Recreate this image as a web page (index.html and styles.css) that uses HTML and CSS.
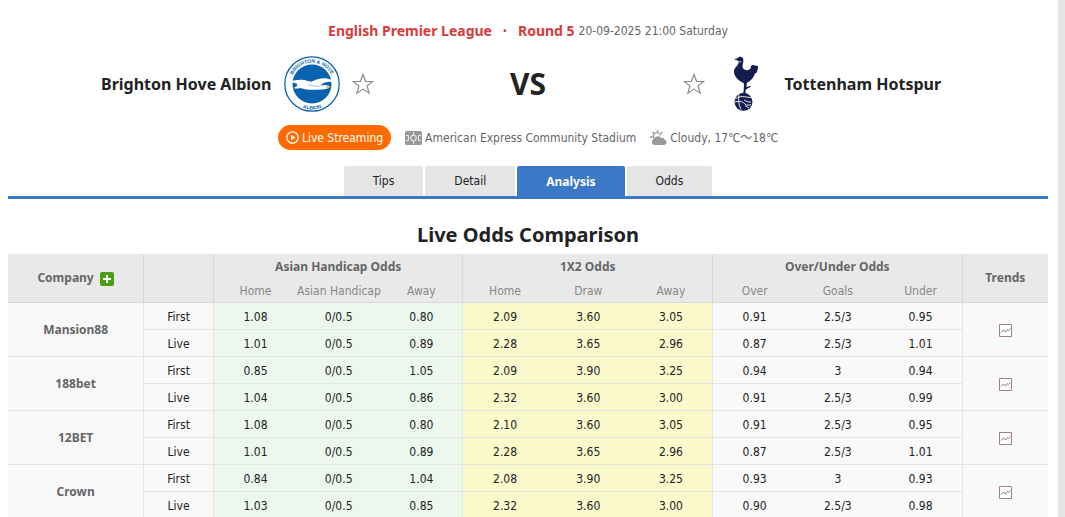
FILE: index.html
```
<!DOCTYPE html>
<html lang="en">
<head>
<meta charset="utf-8">
<title>Brighton Hove Albion VS Tottenham Hotspur - Analysis</title>
<link rel="stylesheet" href="styles.css">
</head>

<body>
<svg class="defs" width="0" height="0">
	<symbol id="star" viewBox="0 0 22 22"><path d="M11 1.500l2.600 6.800 7.100.2-5.600 4.400 2 7.300L11 16.100l-6.100 4.100 2-7.300L1.300 8.500l7.100-.2z" fill="#fff" stroke="#8a8a8a" stroke-width="1.200"/></symbol>
	<symbol id="trend" viewBox="0 0 13 13"><path d="M.5.5h12v12H.5z" fill="#fff" stroke="#a08478"/><path d="M2 8.500l2.500-2.500 2 2L8.500 5.500l1 1L11.500 4.500" fill="none" stroke="#777"/></symbol>
</svg>
<div id="page">
	<div class="league">
		<a href="#">English Premier League</a><b>·</b><a href="#">Round 5</a>
		<span>20-09-2025 21:00 Saturday</span>
	</div>
	<div class="match">
		<div class="home">
			<a href="#">Brighton Hove Albion</a>
			<svg class="logo" viewBox="0 0 56 56">
				<circle cx="28" cy="28" r="27.200" fill="#fff" stroke="#0b63b0" stroke-width="1.300"/>
				<circle cx="28" cy="28" r="19.500" fill="#0b63b0"/>
				<path id="arcTop" d="M6.700 28a21.300 21.300 0 0 1 42.600 0" fill="none"/>
				<path id="arcBottom" d="M2.500 28a25.500 25.500 0 0 0 51 0" fill="none"/>
				<text class="badge-text"><textPath href="#arcTop" startOffset="50%" text-anchor="middle">BRIGHTON &amp; HOVE</textPath></text>
				<text class="badge-text"><textPath href="#arcBottom" startOffset="50%" text-anchor="middle">ALBION</textPath></text>
				<path d="M3 26.200c5-1 9-2.700 15-2.400 4 .2 6 1.600 9 2 5-2.500 11-4.300 16-3.300 5 1 8 2.800 10 4.300-5-1.300-9-1.300-12-.3-3 1-3 1.500-4 3 3.500-.3 7.500-.7 8.700 1.200-2 2.700-5.700 2.500-8.700 2.800-8 .7-15 .5-21-1.500-2.500.8-4.500.7-6.500 0l3.500-1.700c-.5-1-.3-1.600.5-2.300-4-1.600-6-1.800-10.500-1.800z" fill="#fff"/>
				<path d="M24 29c5 .5 8 2 13 1" fill="none" stroke="#8fb7dc" stroke-width=".8"/>
				<path d="M42.500 29.700l4 1.500-4 1.500z" fill="#e5b128"/>
			</svg>
			<button class="star" aria-label="Follow Brighton Hove Albion"><svg><use href="#star"/></svg></button>
		</div>
		<div class="vs">VS</div>
		<div class="away">
			<button class="star" aria-label="Follow Tottenham Hotspur"><svg><use href="#star"/></svg></button>
			<svg class="logo" viewBox="0 0 56 56">
				<g fill="#141d4d">
					<path d="M17 3.300l3.500-1c1-2 4.300-2.300 5.400 0 .9 2 .4 4.200-.2 6.200-.6 2.600.2 4.400 2.300 5.300 2.700 1 5-.2 5.900-2.100-.6-1.700.4-2.600 2.300-2.600 1.800.1 3.500 1.200 4.800.7-.3 1.800.4 3.200-.7 4.500.2 1.800-.8 2.900-2.300 3.300-1 3.800-4 7.200-8 9.200l-.6 4.200 3.700-1 1 .8-3.200 1.500-2.100 1.500-.6 4.200h-2l.6-5 .1-5.700c-5-2.500-9.400-6-9.900-11-.2-2.700 1-4.600 2.600-6 1.800-1.700 2.300-3.400 1.700-5.600z"/>
					<circle cx="26.500" cy="45.800" r="9"/>
				</g>
				<g fill="none" stroke="#fff" stroke-width=".9">
					<path d="M21.500 5.500c1 1 2.200.8 2.700-.5"/>
					<path d="M18.500 42.800c4.500-3.500 9-2 16.500-1"/>
					<path d="M18 46c5.500-1.500 8 0 10 2 2 1.500 4 1.500 6 .5"/>
					<path d="M22 38.500c-1 5-.5 10 2 15M27 44c2 1 4 2.500 7 2M28 49.500l4 2.500"/>
				</g>
			</svg>
			<a href="#">Tottenham Hotspur</a>
		</div>
	</div>
	<div class="info">
		<a class="live" href="#">
			<svg width="13" height="13" viewBox="0 0 13 13"><circle cx="6.500" cy="6.500" r="5.700" fill="none" stroke="#fff" stroke-width="1.300"/><path d="M5 3.700v5.600l4.500-2.800z" fill="#fff"/></svg>
			Live Streaming
		</a>
		<span class="place">
			<svg width="17" height="14" viewBox="0 0 17 14"><rect y="0" width="17" height="14" rx="1.500" fill="#999"/><path d="M8.500 1v3M8.500 10v3M1 4.500h2.500v5H1M16 4.500h-2.500v5H16" fill="none" stroke="#eee"/><circle cx="8.500" cy="7" r="2.800" fill="none" stroke="#fff"/></svg>
			American Express Community Stadium
		</span>
		<span class="weather">
			<svg width="17" height="16" viewBox="0 0 17 16"><path d="M7.500 0v2.500M2.500 2l1.800 1.800M12.500 2l-1.800 1.800M0 7h2.500M4.300 8.500a3.500 3.500 0 1 1 6-3" fill="none" stroke="#999" stroke-width="1.300"/><path d="M5 15a3.300 3.300 0 0 1-.5-6.500C5.500 5.800 9.500 5.500 11 8c2-.8 3.500.3 3.600 1.700 3 .8 2.500 5.300-.6 5.300z" fill="#999"/></svg>
			Cloudy, 17℃～18℃
		</span>
	</div>
	<div class="tabs">
		<a href="#">Tips</a>
		<a href="#">Detail</a>
		<a class="on" href="#">Analysis</a>
		<a href="#">Odds</a>
	</div>
	<h2>Live Odds Comparison</h2>
	<table class="odds">
		<colgroup>
			<col class="c-company"><col class="c-type">
			<col span="9" class="c-odds">
			<col class="c-trend">
		</colgroup>
		<thead>
			<tr>
				<th rowspan="2" class="line">Company <button class="add" aria-label="Add company"><svg width="14" height="14" viewBox="0 0 14 14"><path d="M7 3v8M3 7h8" stroke="#fff" stroke-width="2"/></svg></button></th>
				<th rowspan="2" class="line"></th>
				<th colspan="3" class="group line">Asian Handicap Odds</th>
				<th colspan="3" class="group line">1X2 Odds</th>
				<th colspan="3" class="group line">Over/Under Odds</th>
				<th rowspan="2">Trends</th>
			</tr>
			<tr class="sub">
				<th>Home</th><th>Asian Handicap</th><th class="line">Away</th>
				<th>Home</th><th>Draw</th><th class="line">Away</th>
				<th>Over</th><th>Goals</th><th class="line">Under</th>
			</tr>
		</thead>
		<tbody>
			<tr>
				<th rowspan="2" class="line">Mansion88</th><td class="line">First</td>
				<td class="ah">1.08</td><td class="ah">0/0.5</td><td class="ah line">0.80</td>
				<td class="eu">2.09</td><td class="eu">3.60</td><td class="eu line">3.05</td>
				<td>0.91</td><td>2.5/3</td><td class="line">0.95</td>
				<td rowspan="2"><a class="trend" href="#" aria-label="Mansion88 trends"><svg><use href="#trend"/></svg></a></td>
			</tr>
			<tr>
				<td class="line">Live</td>
				<td class="ah">1.01</td><td class="ah">0/0.5</td><td class="ah line">0.89</td>
				<td class="eu">2.28</td><td class="eu">3.65</td><td class="eu line">2.96</td>
				<td>0.87</td><td>2.5/3</td><td class="line">1.01</td>
			</tr>
			<tr>
				<th rowspan="2" class="line">188bet</th><td class="line">First</td>
				<td class="ah">0.85</td><td class="ah">0/0.5</td><td class="ah line">1.05</td>
				<td class="eu">2.09</td><td class="eu">3.90</td><td class="eu line">3.25</td>
				<td>0.94</td><td>3</td><td class="line">0.94</td>
				<td rowspan="2"><a class="trend" href="#" aria-label="188bet trends"><svg><use href="#trend"/></svg></a></td>
			</tr>
			<tr>
				<td class="line">Live</td>
				<td class="ah">1.04</td><td class="ah">0/0.5</td><td class="ah line">0.86</td>
				<td class="eu">2.32</td><td class="eu">3.60</td><td class="eu line">3.00</td>
				<td>0.91</td><td>2.5/3</td><td class="line">0.99</td>
			</tr>
			<tr>
				<th rowspan="2" class="line">12BET</th><td class="line">First</td>
				<td class="ah">1.08</td><td class="ah">0/0.5</td><td class="ah line">0.80</td>
				<td class="eu">2.10</td><td class="eu">3.60</td><td class="eu line">3.05</td>
				<td>0.91</td><td>2.5/3</td><td class="line">0.95</td>
				<td rowspan="2"><a class="trend" href="#" aria-label="12BET trends"><svg><use href="#trend"/></svg></a></td>
			</tr>
			<tr>
				<td class="line">Live</td>
				<td class="ah">1.01</td><td class="ah">0/0.5</td><td class="ah line">0.89</td>
				<td class="eu">2.28</td><td class="eu">3.65</td><td class="eu line">2.96</td>
				<td>0.87</td><td>2.5/3</td><td class="line">1.01</td>
			</tr>
			<tr>
				<th rowspan="2" class="line">Crown</th><td class="line">First</td>
				<td class="ah">0.84</td><td class="ah">0/0.5</td><td class="ah line">1.04</td>
				<td class="eu">2.08</td><td class="eu">3.90</td><td class="eu line">3.25</td>
				<td>0.93</td><td>3</td><td class="line">0.93</td>
				<td rowspan="2"><a class="trend" href="#" aria-label="Crown trends"><svg><use href="#trend"/></svg></a></td>
			</tr>
			<tr>
				<td class="line">Live</td>
				<td class="ah">1.03</td><td class="ah">0/0.5</td><td class="ah line">0.85</td>
				<td class="eu">2.32</td><td class="eu">3.60</td><td class="eu line">3.00</td>
				<td>0.90</td><td>2.5/3</td><td class="line">0.98</td>
			</tr>
		</tbody>
	</table>
</div>
</body>
</html>
```

FILE: styles.css
```
*{ margin:0; padding:0; box-sizing:border-box;}
body{ background:#e5e5e5; font:12px/18px Tahoma,"DejaVu Sans Condensed","Noto Sans CJK SC",sans-serif; color:#222;}
a{ color:inherit; text-decoration:none;}
button{ border:0; background:none; cursor:pointer;}
svg{ display:block; flex:none;}
.defs{ position:absolute;}
#page{ margin-right:7px; padding:20px 10px 0 8px; background:#fff; min-height:100vh;}
.league a,.match,.tabs .on,h2,.odds th{ font-family:Tahoma,"Noto Sans",sans-serif;}

.league{ display:flex; justify-content:center; align-items:center; height:22px; color:#666;}
.league a,.league b{ font-size:14px; font-weight:bold; color:#d93a3a;}
.league b{ width:26px; text-align:center;}
.league span{ margin-left:4px;}

.match{ display:grid; grid-template-columns:1fr 309px 1fr; align-items:center; height:56px; margin-top:14px; font-size:16px; font-weight:bold;}
.home,.away{ display:flex; align-items:center; gap:12px;}
.home{ justify-content:flex-end;}
.logo{ width:56px; height:56px;}
.badge-text{ font:bold 5px "Liberation Sans",sans-serif; fill:#0b63b0;}
.star svg{ width:22px; height:22px;}
.vs{ text-align:center; font-size:30px;}

.info{ display:flex; justify-content:center; align-items:center; gap:14px; margin-top:13px; color:#666;}
.info a,.info span{ display:flex; align-items:center; gap:3px;}
.live{ height:25px; padding:0 8px; border-radius:13px; background:#ff6a00;}
.info .live{ color:#fff;}

.tabs{ display:flex; justify-content:center; gap:2px; margin-top:16px; border-bottom:3px solid #3c78c8;}
.tabs a{ height:30px; padding:0 29px; line-height:31px; background:#e5e5e5; border-radius:2px 2px 0 0;}
.tabs .on{ background:#3c78c8; color:#fff; font-weight:bold;}

h2{ margin-top:21px; font-size:20px; line-height:30px; text-align:center;}
.odds{ width:100%; margin-top:4px; table-layout:fixed; border-collapse:separate; border-spacing:0; text-align:center;}
.c-company{ width:13.1%;}
.c-type{ width:6.7%;}
.c-odds{ width:8%;}
thead th{ background:#e9e9e9; color:#666; border-bottom:1px solid #d8d8d8;}
thead .group{ height:25px; border-bottom:0;}
thead .line{ border-right:1px solid #d8d8d8;}
.odds .sub th{ height:24px; color:#888; font-family:inherit; font-weight:normal; white-space:nowrap;}
tbody th{ color:#666;}
tbody th,tbody td{ height:27px; padding-top:1px; background:#f9f9f9; border-bottom:1px solid #e4e4e4;}
tbody .line{ border-right:1px solid #e4e4e4;}
tbody .ah{ background:#ecf8ee;}
tbody .eu{ background:#fafacd;}
.add{ margin-left:3px; vertical-align:middle; background:#47a013; border-radius:2px;}
.trend{ display:block;}
.trend svg{ width:13px; height:13px; margin:0 auto;}
```
